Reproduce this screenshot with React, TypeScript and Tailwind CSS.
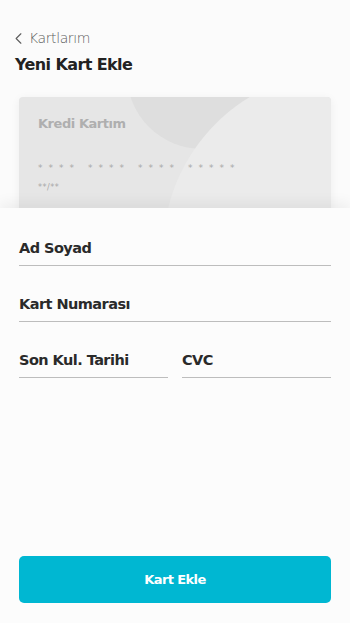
import { ChevronLeft } from 'lucide-react'

const font = { fontFamily: '"DejaVu Sans", "Noto Sans", sans-serif' }

function Field({ label, className = '' }: { label: string; className?: string }) {
  return (
    <div className={`border-b border-[#bdbdbd] pb-[7px] ${className}`}>
      <span className="block text-[14.5px] leading-[20px] font-bold text-[#2a2a2a] tracking-[-0.55px]">{label}</span>
    </div>
  )
}

function Stars({ n }: { n: number }) {
  return (
    <div className="flex">
      {Array.from({ length: n }).map((_, i) => (
        <span key={i} className="w-[10.5px] text-[9px] leading-[10px] text-[#a8a8a8]">*</span>
      ))}
    </div>
  )
}

export default function App() {
  return (
    <div className="w-[350px] h-[623px] bg-[#fbfbfb] flex flex-col overflow-hidden" style={font}>
      <div className="px-[14px] pt-[28px]">
        <button className="flex items-center gap-[1px] text-[#5c5c5c]">
          <ChevronLeft className="w-[19px] h-[19px] -ml-[5px]" strokeWidth={1.4} />
          <span className="text-[14px] font-light tracking-[-0.4px]">Kartlarım</span>
        </button>
        <h1 className="mt-[4px] ml-[1px] text-[16px] font-bold text-[#222] tracking-[-0.6px]">Yeni Kart Ekle</h1>
      </div>

      <div className="px-[19px] mt-[20px] h-[111px] shrink-0">
        <div className="relative h-[130px] rounded-[4px] bg-[#e6e6e6] overflow-hidden shadow-[0_2px_10px_rgba(0,0,0,0.06)]">
          <div className="absolute w-[150px] h-[150px] rounded-full bg-[#dedede] left-[108px] -top-[98px]" />
          <div className="absolute w-[360px] h-[360px] rounded-full bg-[#ebebeb] left-[144px] -top-[26px]" />
          <div className="relative px-[19px] pt-[19px]">
            <p className="text-[13px] leading-[16px] font-bold text-[#afafaf] tracking-[-0.45px]">Kredi Kartım</p>
            <div className="mt-[31px] flex gap-[8px]">
              <Stars n={4} />
              <Stars n={4} />
              <Stars n={4} />
              <Stars n={5} />
            </div>
            <p className="mt-[10px] text-[8px] leading-[10px] text-[#a8a8a8] tracking-[0.5px]">**/**</p>
          </div>
        </div>
      </div>

      <div className="relative flex-1 bg-[#fcfcfc] shadow-[0_-6px_12px_rgba(0,0,0,0.05)] px-[19px] pt-[30px] pb-[20px] flex flex-col">
        <Field label="Ad Soyad" />
        <Field label="Kart Numarası" className="mt-[28px]" />
        <div className="mt-[28px] flex gap-[14px]">
          <Field label="Son Kul. Tarihi" className="flex-1" />
          <Field label="CVC" className="flex-1" />
        </div>
        <div className="flex-1" />
        <button className="h-[47px] w-full rounded-[5px] bg-[#00b7d2] text-white text-[13px] font-bold tracking-[-0.6px]">
          Kart Ekle
        </button>
      </div>
    </div>
  )
}
